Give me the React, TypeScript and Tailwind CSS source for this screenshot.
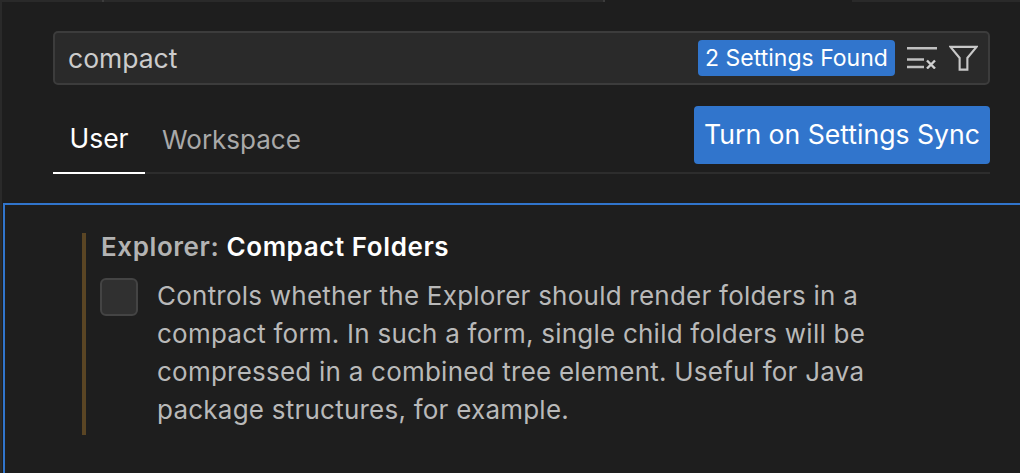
export default function App() {
  return (
    <div className="h-[473px] w-[1020px] overflow-hidden bg-[#1e1e1e] font-['Inter',sans-serif]">
      <div className="flex h-[2px]">
        <div className="w-[102px] bg-[#2a2a2a]" />
        <div className="w-[2px] bg-[#3c3c3c]" />
        <div className="w-[499px] bg-[#2a2a2a]" />
        <div className="w-[2px] bg-[#3c3c3c]" />
        <div className="w-[247px]" />
        <div className="flex-1 bg-[#2a2a2a]" />
      </div>
      <div className="flex h-[471px] flex-col border-l-2 border-[#2a2a2a]">
        {/* Search + tabs header */}
        <div className="ml-[51px] mr-[30px] pt-[29px]">
          <div className="flex h-[54px] items-center rounded-[5px] border-2 border-[#3c3c3c] bg-[#2a2a2a] pl-[13px] pr-[10px]">
            <span className="flex-1 text-[26.5px] leading-none text-[#cccccc]">compact</span>
            <span className="mr-[2px] flex h-[36px] w-[197px] items-center justify-center rounded-[4px] bg-[#3175cc] text-[23px] text-white">
              2 Settings Found
            </span>
            <svg viewBox="0 0 30 22" className="ml-[10px] h-[22px] w-[30px]" fill="none" stroke="#c0c0c0" strokeWidth="2.4">
              <path d="M0 1.2h30M0 12.5h17M0 20h17" />
              <path d="M20 13.5l8 8M28 13.5l-8 8" stroke="#d0d0d0" />
            </svg>
            <svg viewBox="0 0 30 26" className="ml-[12px] h-[26px] w-[29px]" fill="none" stroke="#c8c8c8" strokeWidth="2.2">
              <path d="M1.5 1.5h27L19 13v12h-8V13z" />
            </svg>
          </div>
          <div className="mt-[21px] flex h-[68px] items-stretch justify-between border-b-2 border-[#2d2d2d]">
            <div className="flex">
              <div className="-mb-[2px] flex w-[92px] items-center justify-center border-b-2 border-white text-[26.5px] text-white">
                User
              </div>
              <div className="ml-[17px] flex items-center text-[26px] text-[#a9a9a9]">Workspace</div>
            </div>
            <button className="h-[58px] w-[296px] rounded-[4px] bg-[#3175cc] text-[26.6px] text-white">
              Turn on Settings Sync
            </button>
          </div>
        </div>
        {/* Focused settings list */}
        <div className="ml-[1px] mt-[29px] flex-1 border-l-2 border-t-2 border-[#3175cc] pl-[77px] pt-[28px]">
          <div className="h-[202px] border-l-4 border-[#5a4524] pl-[15px]">
            <div className="text-[26px] leading-[28px] font-semibold tracking-[0.58px] text-[#b3b3b3]">
              Explorer: <span className="text-white">Compact Folders</span>
            </div>
            <div className="mt-[16px] flex">
              <div className="-ml-[1px] mt-[1px] h-[38px] w-[38px] shrink-0 rounded-[6px] border-2 border-[#444444] bg-[#303030]" />
              <p className="ml-[19px] w-[740px] text-[26px] leading-[38px] tracking-[0.23px] text-[#b9b9b9]">
                Controls whether the Explorer should render folders in a compact form. In such a form, single child folders will be compressed in a combined tree element. Useful for Java package structures, for example.
              </p>
            </div>
          </div>
        </div>
      </div>
    </div>
  );
}
